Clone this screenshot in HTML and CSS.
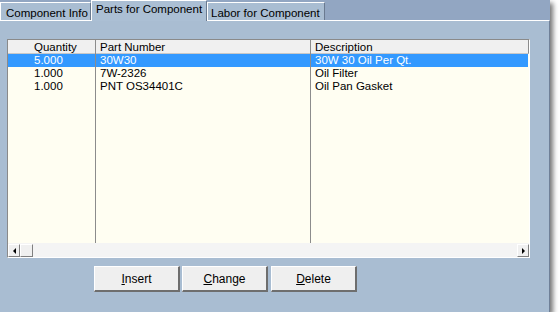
FILE: index.html
```html
<!DOCTYPE html>
<html>
<head>
<meta charset="utf-8">
<link rel="stylesheet" href="styles.css">
</head>
<body>
<div class="window">
  <div class="tabstrip">
    <div class="tab">Component Info</div>
    <div class="tab active">Parts for Component</div>
    <div class="tab">Labor for Component</div>
  </div>
  <div class="panel">
    <div class="list">
      <div class="grid">
        <div class="col c1">
          <div class="hdr">Quantity</div>
          <div class="cell sel">5.000</div>
          <div class="cell">1.000</div>
          <div class="cell">1.000</div>
        </div>
        <div class="col c2">
          <div class="hdr">Part Number</div>
          <div class="cell sel">30W30</div>
          <div class="cell">7W-2326</div>
          <div class="cell">PNT OS34401C</div>
        </div>
        <div class="col c3">
          <div class="hdr">Description</div>
          <div class="cell sel">30W 30 Oil Per Qt.</div>
          <div class="cell">Oil Filter</div>
          <div class="cell">Oil Pan Gasket</div>
        </div>
      </div>
      <div class="hscroll">
        <div class="sbtn"><span class="arr left"></span></div>
        <div class="thumb"></div>
        <div class="track"></div>
        <div class="sbtn"><span class="arr right"></span></div>
      </div>
    </div>
    <div class="buttons">
      <button class="btn"><u>I</u>nsert</button>
      <button class="btn"><u>C</u>hange</button>
      <button class="btn"><u>D</u>elete</button>
    </div>
  </div>
</div>
</body>
</html>
```
FILE: styles.css
```css
html, body {
  margin: 0;
  padding: 0;
  background: #ffffff;
}
body {
  font-family: "Liberation Sans", Arial, sans-serif;
  font-size: 11.5px;
  color: #000;
}
.window {
  width: 550px;
  height: 312px;
  display: flex;
  flex-direction: column;
  background: #a9bdd2;
  box-shadow: 3px 3px 5px rgba(0,0,0,0.55);
}
.tabstrip {
  height: 20px;
  background: #92a6c2;
  display: flex;
  align-items: flex-end;
  box-sizing: border-box;
}
.tab {
  height: 18px;
  box-sizing: border-box;
  padding: 3px 0 0 5px;
  background: #a9bdd2;
  border-top: 1px solid #ffffff;
  border-left: 1px solid #ffffff;
  border-right: 1px solid #6a7a90;
  line-height: 14px;
  white-space: nowrap;
}
.tab:first-child { width: 91px; }
.tab.active {
  height: 21px;
  width: 116px;
  margin-bottom: -1px;
  padding-top: 1px;
  padding-left: 4px;
  background: #abbfd4;
  position: relative;
  z-index: 1;
}
.tab:last-child { width: 118px; padding-left: 3px; }
.panel {
  flex: 1;
  border-top: 1px solid #ffffff;
  border-right: 1px solid #6f8098;
  display: flex;
  flex-direction: column;
  padding: 18px 0 0 7px;
}
.list {
  width: 523px;
  height: 219px;
  box-sizing: border-box;
  border-top: 1px solid #8a8a8a;
  border-left: 1px solid #8a8a8a;
  border-right: 1px solid #ffffff;
  border-bottom: 1px solid #ffffff;
  background: #fffef2;
  display: flex;
  flex-direction: column;
}
.grid {
  flex: 1;
  display: flex;
}
.col {
  display: flex;
  flex-direction: column;
  border-right: 1px solid #8c8c8c;
}
.c1 { width: 87px; }
.c2 { width: 214px; }
.c3 { flex: 1; border-right: none; }
.hdr {
  height: 14px;
  line-height: 14px;
  background: #f0f0f0;
  border-bottom: 1px solid #c8c8c8;
  box-sizing: border-box;
  padding-left: 4px;
  white-space: nowrap;
}
.c1 .hdr, .c1 .cell { padding-left: 26px; }
.c3 .hdr { border-right: 1px solid #8c8c8c; }
.cell {
  height: 13px;
  line-height: 13px;
  padding-left: 4px;
  white-space: nowrap;
}
.cell.sel {
  background: #3399ff;
  color: #ffffff;
}
.c3 .cell.sel { margin-right: 1px; }
.hscroll {
  height: 14px;
  display: flex;
  background: #f4f4f4;
  padding-top: 1px;
  box-sizing: border-box;
}
.sbtn, .thumb {
  width: 12px;
  height: 13px;
  box-sizing: border-box;
  background: #f0f0f0;
  border-top: 1px solid #ffffff;
  border-left: 1px solid #ffffff;
  border-right: 1px solid #808080;
  border-bottom: 1px solid #808080;
  display: flex;
  align-items: center;
  justify-content: center;
}
.thumb { width: 13px; }
.track { flex: 1; }
.arr {
  width: 0;
  height: 0;
  border-top: 3px solid transparent;
  border-bottom: 3px solid transparent;
}
.arr.left { border-right: 3px solid #000; }
.arr.right { border-left: 3px solid #000; }
.buttons {
  display: flex;
  gap: 2px;
  margin-top: 8px;
  padding-left: 87px;
}
.btn {
  width: 86px;
  height: 26px;
  font-family: "Liberation Sans", Arial, sans-serif;
  font-size: 12px;
  color: #000;
  background: #efefef;
  border-top: 1px solid #ffffff;
  border-left: 1px solid #ffffff;
  border-right: 2px solid #6e6e6e;
  border-bottom: 2px solid #6e6e6e;
  padding: 0;
  margin: 0;
}
.btn:nth-child(3) { margin-left: 1px; }
```
